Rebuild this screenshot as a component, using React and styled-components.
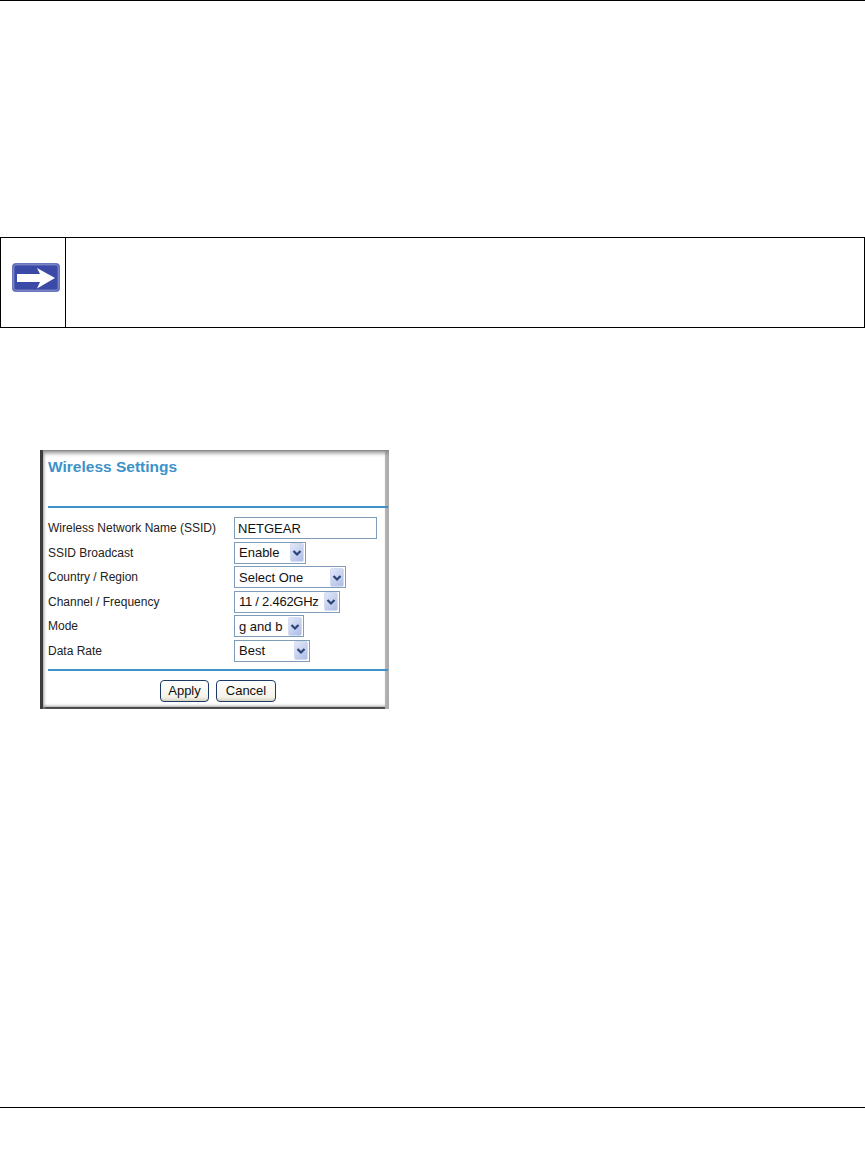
import React from 'react';
import styled, { createGlobalStyle } from 'styled-components';

const GlobalStyle = createGlobalStyle`
  html, body {
    margin: 0;
    padding: 0;
    background: #fff;
  }
  * {
    box-sizing: border-box;
  }
`;

const fields = [
  { label: 'Wireless Network Name (SSID)', value: 'NETGEAR', width: 143 },
  { label: 'SSID Broadcast', value: 'Enable', width: 72, select: true },
  { label: 'Country / Region', value: 'Select One', width: 112, select: true },
  { label: 'Channel / Frequency', value: '11 / 2.462GHz', width: 106, select: true, tight: true },
  { label: 'Mode', value: 'g and b', width: 70, select: true },
  { label: 'Data Rate', value: 'Best', width: 76, select: true },
];

function NoteArrow() {
  return (
    <svg width="48" height="29" viewBox="0 0 48 29">
      <rect x="0.5" y="0.5" width="47" height="28" rx="3" fill="#3a4aa6" stroke="#6a77c0" />
      <rect x="1.8" y="1.8" width="44.4" height="25.4" rx="2" fill="none" stroke="#f0f2fa" strokeWidth="0.5" />
      <path d="M5 11H28L25 5L43 15L25 25.5L28 19H5Z" fill="#fff" />
    </svg>
  );
}

function SelectArrow() {
  return (
    <svg width="12" height="17" viewBox="0 0 12 17">
      <path d="M2.5 7L6 10.5L9.5 7" fill="none" stroke="#2b4478" strokeWidth="2.2" />
    </svg>
  );
}

export default function App() {
  return (
    <Page>
      <GlobalStyle />
      <Note>
        <NoteIcon>
          <NoteArrow />
        </NoteIcon>
        <NoteBody />
      </Note>
      <Panel>
        <Title>Wireless Settings</Title>
        <Rule />
        <Fields>
          {fields.map((f) => (
            <FieldRow key={f.label}>
              <FieldLabel>{f.label}</FieldLabel>
              <Control $width={f.width} $select={f.select} $tight={f.tight}>
                <span>{f.value}</span>
                {f.select && (
                  <ArrowButton>
                    <SelectArrow />
                  </ArrowButton>
                )}
              </Control>
            </FieldRow>
          ))}
        </Fields>
        <Rule />
        <Buttons>
          <Button $width={49}>Apply</Button>
          <Button $width={60}>Cancel</Button>
        </Buttons>
      </Panel>
      <Footer />
    </Page>
  );
}

const Page = styled.div`
  width: 865px;
  height: 1170px;
  background: #fff;
  border-top: 1px solid #000;
  display: flex;
  flex-direction: column;
  overflow: hidden;
  font-family: "Liberation Sans", Arial, sans-serif;
  color: #1a1a1a;
`;

const Note = styled.div`
  margin-top: 236px;
  width: 865px;
  height: 91px;
  border: 1px solid #000;
  display: flex;
  flex: none;
`;

const NoteIcon = styled.div`
  width: 65px;
  flex: none;
  border-right: 1px solid #000;
  padding: 25px 0 0 11px;
  svg {
    display: block;
  }
`;

const NoteBody = styled.div`
  flex: 1;
`;

const Panel = styled.div`
  margin: 122px 0 0 40px;
  width: 349px;
  height: 259px;
  flex: none;
  background: #fff;
  padding: 7px 0 0 8px;
  box-shadow:
    inset 3px 0 0 #3c3c3c,
    inset 6px 0 3px -2px #9a9a9a,
    inset 0 1px 0 #888,
    inset 0 5px 4px -2px #8c8c8c,
    inset -5px 0 1px -1px #b0b0b0,
    inset 0 -2px 0 #4a4a4a,
    inset 0 -5px 3px -2px #a0a0a0;
`;

const Title = styled.h1`
  margin: 0;
  height: 49px;
  font-size: 15.5px;
  line-height: 19px;
  font-weight: 700;
  color: #3d92c8;
`;

const Rule = styled.div`
  height: 2px;
  margin-right: 1px;
  background: #3d92c8;
`;

const Fields = styled.div`
  display: flex;
  flex-direction: column;
  gap: 2.5px;
  padding: 9px 0 7px;
`;

const FieldRow = styled.div`
  display: flex;
  align-items: center;
  height: 22px;
`;

const FieldLabel = styled.div`
  width: 186px;
  flex: none;
  font-size: 12px;
  color: #222;
`;

const Control = styled.div`
  width: ${(p) => p.$width}px;
  height: 22px;
  border: 1px solid #7f9db9;
  background: #fff;
  display: flex;
  align-items: center;
  justify-content: space-between;
  padding: ${(p) => (p.$select ? '0 1px 0 4px' : '0 3px')};
  font-size: 13px;
  letter-spacing: ${(p) => (p.$tight ? '-0.25px' : '0')};
  color: #111;
`;

const ArrowButton = styled.div`
  width: 14px;
  height: 19px;
  background: linear-gradient(135deg, #e2e8f8, #aebde6);
  border: 1px solid #d3dcf2;
  border-radius: 2px;
  display: flex;
  align-items: center;
  justify-content: center;
`;

const Buttons = styled.div`
  display: flex;
  justify-content: center;
  gap: 7px;
  padding: 9px 0 0 0;
  margin-left: -1px;
`;

const Button = styled.div`
  width: ${(p) => p.$width}px;
  height: 22px;
  border: 1px solid #1c3a66;
  border-radius: 4px;
  background: linear-gradient(180deg, #ffffff, #f4f2e9 80%, #d8d4c2);
  font-size: 13px;
  line-height: 20px;
  text-align: center;
  color: #111;
`;

const Footer = styled.div`
  margin-top: 398px;
  height: 1px;
  flex: none;
  background: #000;
`;
